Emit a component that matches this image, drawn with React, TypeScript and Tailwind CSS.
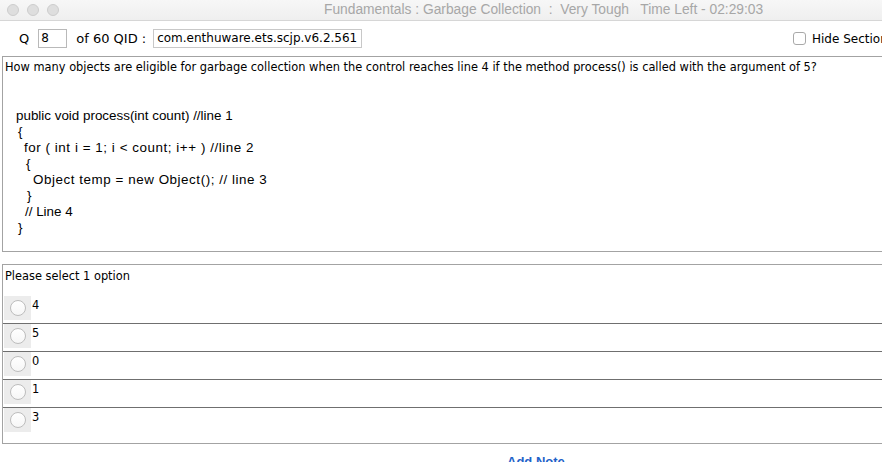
import React from 'react';

const options = ['4', '5', '0', '1', '3'];

const codeLines: { text: string; cls: string }[] = [
  { text: 'public void process(int count) //line 1', cls: 'pl-[11px]' },
  { text: '{', cls: 'pl-[13px]' },
  { text: 'for ( int i = 1; i < count; i++ ) //line 2', cls: 'pl-[19px] tracking-[0.55px]' },
  { text: '{', cls: 'pl-[21px]' },
  { text: 'Object temp = new Object(); // line 3', cls: 'pl-[28px] tracking-[0.55px]' },
  { text: '}', cls: 'pl-[22px]' },
  { text: '// Line 4', cls: 'pl-[20px]' },
  { text: '}', cls: 'pl-[13px]' },
];

const Radio = () => (
  <div className="w-[27px] h-[24px] bg-[#ececec] flex items-center justify-center shrink-0">
    <div className="w-[16px] h-[16px] rounded-full border border-[#bdbdbd] bg-gradient-to-b from-white to-[#f6f6f6]" />
  </div>
);

export default function App() {
  return (
    <div className="w-[882px] h-[462px] overflow-hidden bg-white relative font-['DejaVu_Sans',sans-serif] text-black">
      {/* Title bar */}
      <div className="h-[21px] flex items-center bg-gradient-to-b from-[#f7f7f7] to-[#efefef] border-b border-[#d6d6d6]">
        <div className="flex items-center gap-[8px] pl-[7px]">
          <span className="w-[12px] h-[12px] rounded-full bg-[#dedede] border border-[#cdcdcd]" />
          <span className="w-[12px] h-[12px] rounded-full bg-[#dedede] border border-[#cdcdcd]" />
          <span className="w-[12px] h-[12px] rounded-full bg-[#dedede] border border-[#cdcdcd]" />
        </div>
        <div className="ml-[265px] text-[13.8px] text-[#a7a7a7] whitespace-pre font-['Liberation_Sans',sans-serif]">
          Fundamentals : Garbage Collection  :  Very Tough   Time Left - 02:29:03
        </div>
      </div>

      {/* Toolbar */}
      <div className="h-[35px] flex items-center whitespace-nowrap">
        <span className="ml-[19px] text-[13px]">Q</span>
        <div className="ml-[9px] w-[29px] h-[19px] border border-[#b9b9b9] pl-[2px] leading-[17px] text-[12px]">8</div>
        <span className="ml-[9px] text-[13px]">of 60 QID :</span>
        <div className="ml-[7px] w-[209px] h-[19px] border border-[#c8c8c8] pl-[3px] leading-[17px] text-[12px]">
          com.enthuware.ets.scjp.v6.2.561
        </div>
        <div className="ml-auto flex items-center text-[12px]">
          <span className="w-[13px] h-[13px] rounded-[3px] border border-[#a9a9a9] bg-white" />
          <span className="ml-[6px] w-[70px] overflow-hidden">Hide Section</span>
        </div>
      </div>

      {/* Question */}
      <div className="ml-[2px] -mr-[4px] h-[196px] border border-[#a3a3a3] pt-[3px] pl-[2px]">
        <p className="text-[11.4px] leading-[15px]">
          How many objects are eligible for garbage collection when the control reaches line 4 if the method process() is called with the argument of 5?
        </p>
        <div className="mt-[33px] font-['Liberation_Sans',sans-serif] text-[13.4px] leading-[16px]">
          {codeLines.map((l, i) => (
            <div key={i} className={`${l.cls} whitespace-pre`}>
              {l.text}
            </div>
          ))}
        </div>
      </div>

      {/* Options */}
      <div className="ml-[2px] -mr-[4px] mt-[12px] h-[180px] border border-[#a3a3a3]">
        <p className="pt-[4px] pl-[2px] text-[11.4px] leading-[15px]">Please select 1 option</p>
        <div className="mt-[12px]">
          {options.map((o, i) => (
            <div
              key={o}
              className={`h-[28px] flex items-start ${i < options.length - 1 ? 'border-b border-[#6f6f6f]' : ''}`}
            >
              <div className="ml-[1px]">
                <Radio />
              </div>
              <span className="ml-[1px] text-[11.4px] leading-[15px] pt-[2px]">{o}</span>
            </div>
          ))}
        </div>
      </div>

      <div className="absolute left-[507px] top-[452px] text-[13px] font-bold text-[#1f63c9] font-['Liberation_Sans',sans-serif]">
        Add Note
      </div>
    </div>
  );
}
